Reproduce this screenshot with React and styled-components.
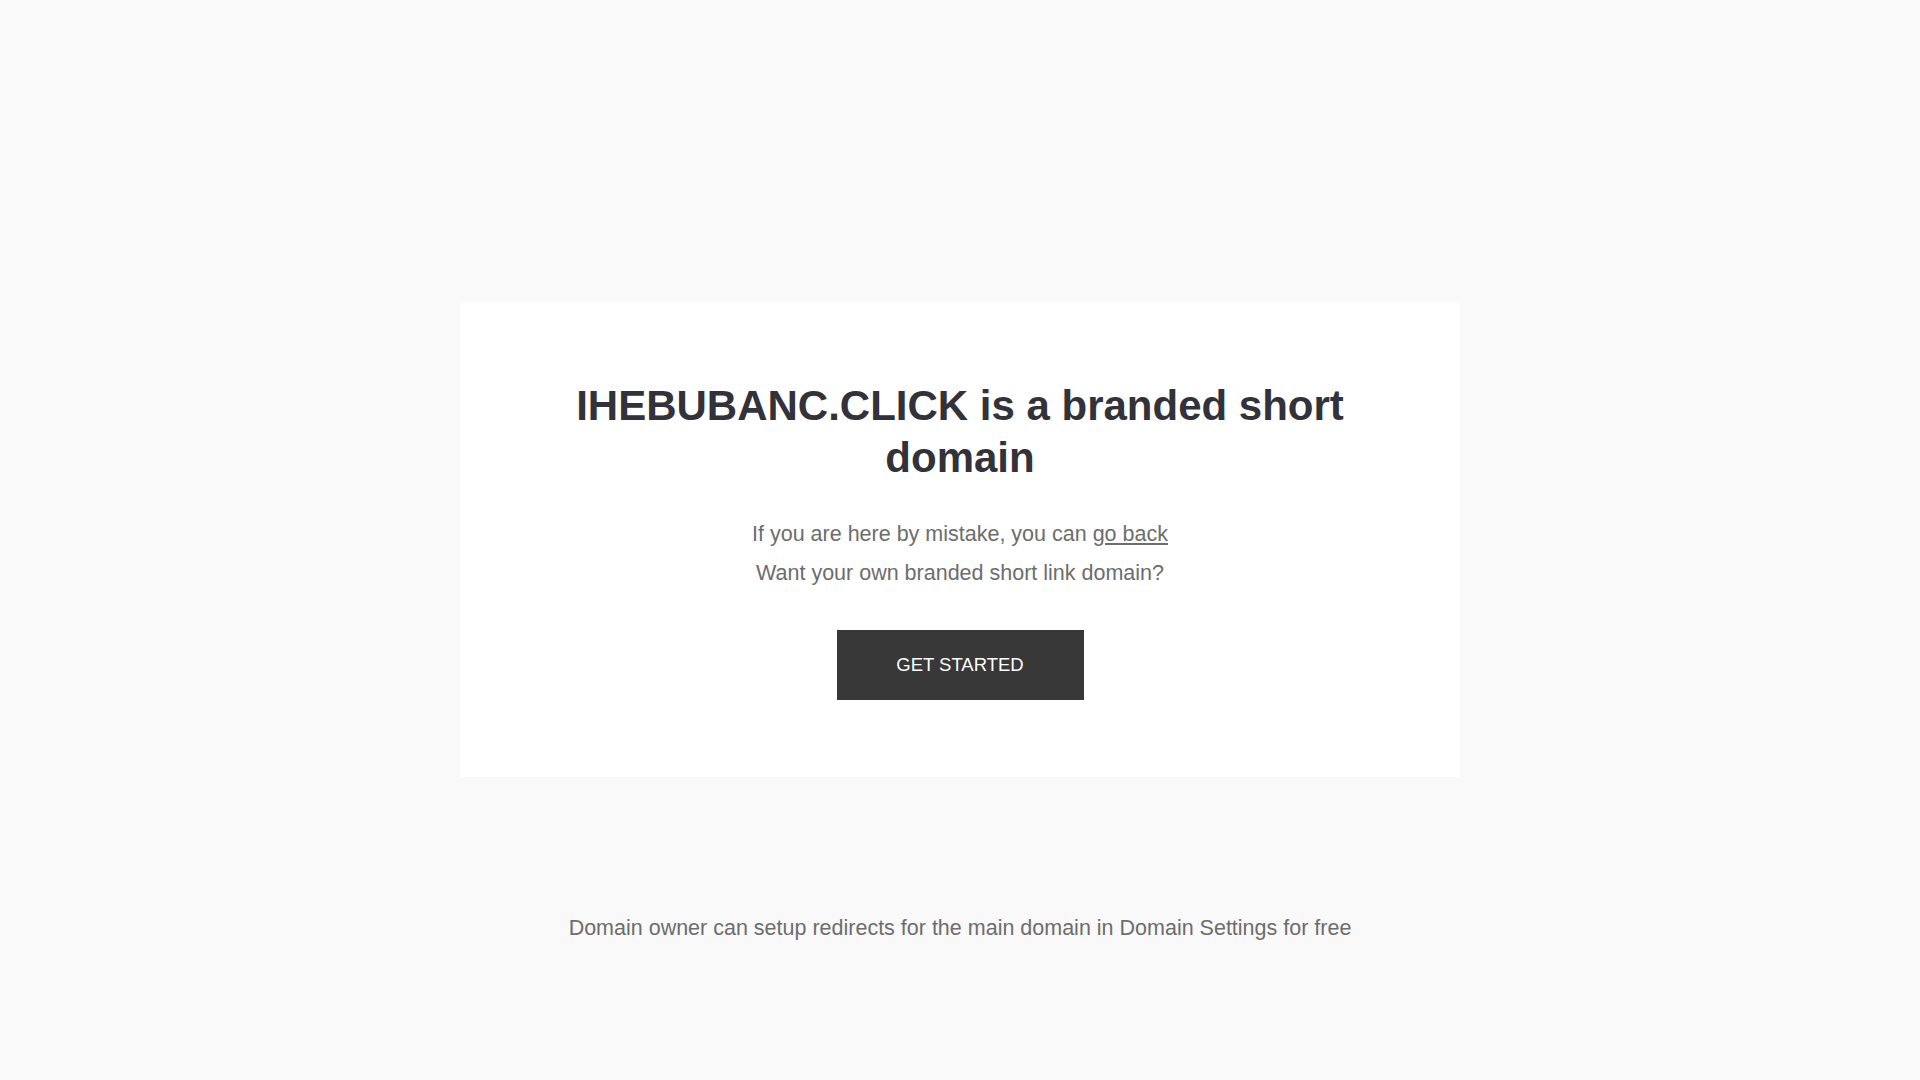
import React from 'react'
import styled, { createGlobalStyle } from 'styled-components'

const GlobalStyle = createGlobalStyle`
  html, body {
    margin: 0;
    padding: 0;
    background: #f9f9f9;
    font-family: "Liberation Sans", Arial, sans-serif;
  }
  * { box-sizing: border-box; }
`

const Page = styled.div`
  min-height: 100vh;
  display: flex;
  flex-direction: column;
  align-items: center;
  padding-top: 302px;
`

const Card = styled.section`
  width: 1000px;
  background: #fff;
  padding: 78px 80px 77px;
  display: flex;
  flex-direction: column;
  align-items: center;
  text-align: center;
`

const Title = styled.h1`
  margin: 0;
  font-size: 42px;
  line-height: 52px;
  font-weight: 700;
  color: #32323b;
`

const Text = styled.p`
  margin: 0;
  font-size: 21.5px;
  line-height: 39px;
  color: #6d6d6d;
`

const Lines = styled.div`
  margin-top: 31px;
`

const BackLink = styled.a`
  color: #6d6d6d;
  text-decoration: underline;
  cursor: pointer;
`

const Button = styled.a`
  margin-top: 37px;
  display: inline-block;
  width: 247px;
  height: 70px;
  line-height: 70px;
  background: #383838;
  color: #fff;
  font-size: 18.5px;
  text-transform: uppercase;
  text-decoration: none;
  cursor: pointer;
`

const Footer = styled(Text)`
  margin-top: 132px;
  text-align: center;
`

export default function App() {
  return (
    <>
      <GlobalStyle />
      <Page>
        <Card>
          <Title>IHEBUBANC.CLICK is a branded short domain</Title>
          <Lines>
            <Text>
              If you are here by mistake, you can <BackLink>go back</BackLink>
            </Text>
            <Text>Want your own branded short link domain?</Text>
          </Lines>
          <Button>Get started</Button>
        </Card>
        <Footer>Domain owner can setup redirects for the main domain in Domain Settings for free</Footer>
      </Page>
    </>
  )
}
